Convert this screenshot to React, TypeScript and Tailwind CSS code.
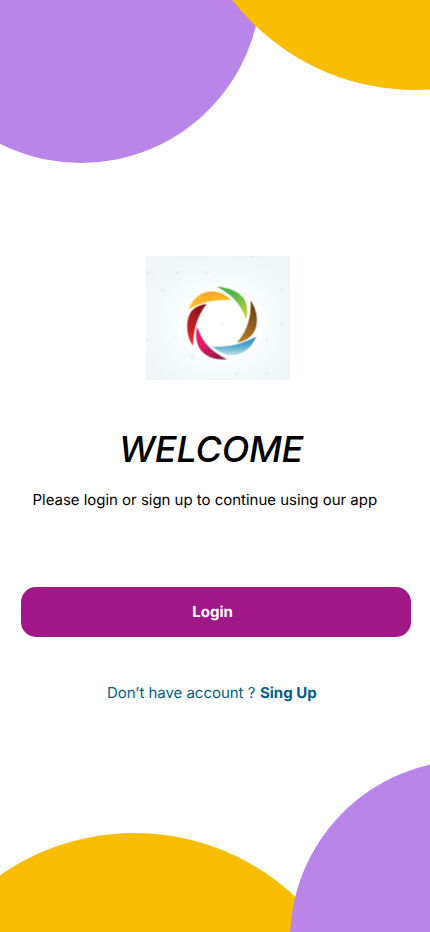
function Logo() {
  return (
    <svg viewBox="0 0 432 372" className="block h-[124px] w-[144px]" role="img" aria-label="Logo">
      <defs>
        <radialGradient id="bg" cx="0.52" cy="0.54" r="0.62">
          <stop offset="0.4" stopColor="#ffffff" />
          <stop offset="0.6" stopColor="#f5fafc" />
          <stop offset="1" stopColor="#f0f5f8" />
        </radialGradient>
        <linearGradient id="orange" x1="0" y1="0" x2="0" y2="1">
          <stop offset="0" stopColor="#fca522" />
          <stop offset="1" stopColor="#fdc92c" />
        </linearGradient>
        <linearGradient id="green" x1="0" y1="0" x2="0.6" y2="1">
          <stop offset="0" stopColor="#36a749" />
          <stop offset="0.5" stopColor="#62b947" />
          <stop offset="1" stopColor="#b6d335" />
        </linearGradient>
        <linearGradient id="brown" x1="0" y1="0" x2="0" y2="1">
          <stop offset="0" stopColor="#60300f" />
          <stop offset="1" stopColor="#b17e2a" />
        </linearGradient>
        <linearGradient id="blue" x1="0" y1="0" x2="0" y2="1">
          <stop offset="0" stopColor="#2687c4" />
          <stop offset="0.5" stopColor="#56a9cd" />
          <stop offset="1" stopColor="#b4dfe0" />
        </linearGradient>
        <linearGradient id="pink" x1="0.1" y1="0" x2="0.7" y2="1">
          <stop offset="0" stopColor="#f0146a" />
          <stop offset="0.45" stopColor="#e81868" />
          <stop offset="1" stopColor="#8f1748" />
        </linearGradient>
        <linearGradient id="red" x1="0.6" y1="0" x2="0.3" y2="1">
          <stop offset="0" stopColor="#841218" />
          <stop offset="1" stopColor="#e9292c" />
        </linearGradient>
      </defs>
      <rect width="432" height="372" fill="url(#bg)" />
      <g fill="#dde4e8" opacity="0.4">
        <rect x="0" y="45" width="9" height="11" />
        <rect x="88" y="45" width="11" height="11" />
        <rect x="178" y="45" width="11" height="11" />
        <rect x="43" y="95" width="11" height="11" />
        <rect x="402" y="95" width="11" height="11" />
        <rect x="312" y="0" width="11" height="6" />
        <rect x="402" y="196" width="11" height="11" />
        <rect x="223" y="196" width="11" height="11" opacity="0.6" />
        <rect x="357" y="247" width="11" height="11" />
        <rect x="0" y="247" width="9" height="11" />
        <rect x="133" y="297" width="11" height="11" />
        <rect x="267" y="348" width="11" height="11" />
        <rect x="357" y="348" width="11" height="11" />
      </g>
      <path d="M74 226L113 277" stroke="#e8eef1" strokeWidth="2" />
      <g transform="translate(102 72)">
        <path d="M25 88C38 55 62 34 98 34C117 35 139 45 154 60C109 57 65 65 25 88Z" fill="url(#orange)" />
        <path d="M111 20C151 24 179 35 193 58C202 75 204 95 199 118C184 75 157 44 111 20Z" fill="url(#green)" />
        <path d="M212 61C230 88 235 119 227 145C218 169 197 184 171 187C203 151 214 110 212 61Z" fill="url(#brown)" />
        <path d="M97 199C140 203 184 193 228 170C216 203 187 225 157 225C133 224 114 214 97 199Z" fill="url(#blue)" />
        <path d="M52 140C63 181 91 214 141 238C108 241 79 232 62 210C48 191 45 163 52 140Z" fill="url(#pink)" />
        <path d="M80 72C52 108 40 147 39 198C21 171 17 137 26 109C36 84 56 75 80 72Z" fill="url(#red)" />
      </g>
    </svg>
  );
}

export default function App() {
  return (
    <main className="relative flex h-[932px] w-[430px] flex-col overflow-hidden bg-white font-['Inter',sans-serif] text-black">
      <div className="absolute -top-[197px] -left-[99px] size-[360px] rounded-full bg-[#ba85e9]" />
      <div className="absolute -top-[373px] left-[183.5px] size-[463px] rounded-full bg-[#f9bd03]" />
      <div className="absolute top-[833px] -left-[100px] size-[469px] rounded-full bg-[#f9bd03]" />
      <div className="absolute top-[760px] left-[290px] size-[360px] rounded-full bg-[#ba85e9]" />

      <div className="mt-64 ml-[146px]">
        <Logo />
      </div>
      <h1 className="mt-[46px] ml-[119px] text-4xl leading-[46px] font-medium tracking-[-0.25px] whitespace-nowrap italic">
        WELCOME
      </h1>
      <p className="mt-[16px] ml-[32.5px] text-[15px] leading-6 tracking-[-0.025px] whitespace-nowrap [text-rendering:geometricPrecision]">
        Please login or sign up to continue using our app
      </p>
      <button className="mt-[75px] ml-[21px] h-[50px] w-[390px] rounded-[15px] bg-[#a01887] pr-[7px] text-[15px] font-bold text-white [text-rendering:geometricPrecision]">
        Login
      </button>
      <p className="mt-11 ml-[107px] text-[15px] leading-6 whitespace-nowrap text-[#035e86] [text-rendering:geometricPrecision]">
        <span className="tracking-[-0.03px]">Don’t have account ? </span>
        <a className="ml-[0.5px] font-bold">Sing Up</a>
      </p>
    </main>
  );
}
